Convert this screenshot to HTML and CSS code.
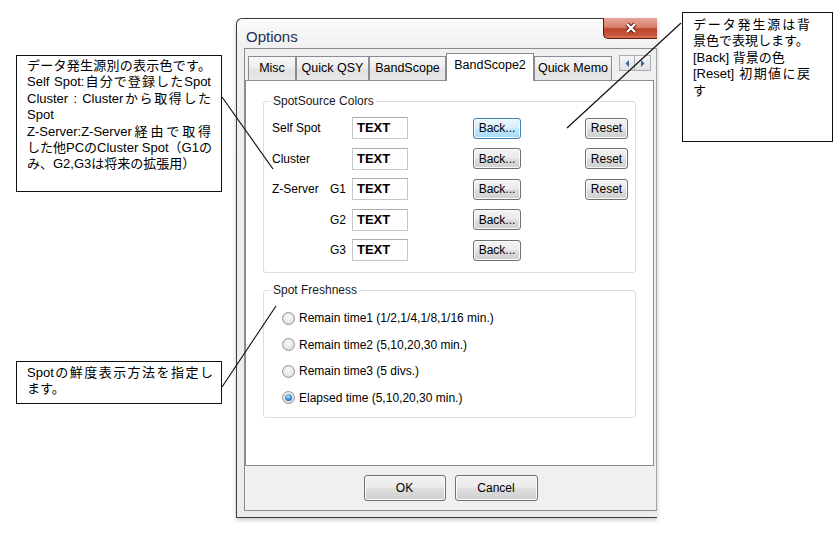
FILE: index.html
```html
<!DOCTYPE html>
<html lang="ja">
<head>
<meta charset="utf-8">
<title>Options</title>
<link rel="stylesheet" href="styles.css">
</head>
<body>
<div class="page">
  <div class="col-left">
    <div class="note note-a">
      <div class="line j">データ発生源別の表示色です。</div>
      <div class="line j">Self Spot:自分で登録したSpot</div>
      <div class="line j">Cluster : Clusterから取得した</div>
      <div class="line">Spot</div>
      <div class="line j">Z-Server:Z-Server経由で取得</div>
      <div class="line j">した他PCのCluster Spot（G1の</div>
      <div class="line">み、G2,G3は将来の拡張用）</div>
    </div>
    <div class="note note-c">
      <div class="line j">Spotの鮮度表示方法を指定し</div>
      <div class="line">ます。</div>
    </div>
  </div>

  <div class="window">
    <div class="titlebar">
      <span class="title">Options</span>
      <div class="close">
        <svg width="14" height="12" viewBox="0 0 14 12"><path d="M3 2 L11 10 M11 2 L3 10" stroke="#5b1d12" stroke-width="4.4" fill="none"/><path d="M3 2 L11 10 M11 2 L3 10" stroke="#ffffff" stroke-width="2.3" fill="none"/></svg>
      </div>
    </div>
    <div class="client">
      <div class="tabs">
        <div class="tab w-misc">Misc</div>
        <div class="tab w-qsy">Quick QSY</div>
        <div class="tab w-bs">BandScope</div>
        <div class="tab sel w-bs2">BandScope2</div>
        <div class="tab w-memo">Quick Memo</div>
        <div class="tab-arrows">
          <span class="arr"><svg width="5" height="7" viewBox="0 0 5 7"><path d="M4 0 L0.5 3.5 L4 7 Z" fill="#3565a8"/></svg></span>
          <span class="arr"><svg width="5" height="7" viewBox="0 0 5 7"><path d="M1 0 L4.5 3.5 L1 7 Z" fill="#3565a8"/></svg></span>
        </div>
      </div>
      <div class="panel">
        <fieldset class="group group-colors">
          <legend>SpotSource Colors</legend>
          <div class="color-grid">
            <span class="lbl span2">Self Spot</span>
            <span class="swatch c3">TEXT</span>
            <button class="btn btn-back focus c4">Back...</button>
            <button class="btn btn-reset c5">Reset</button>

            <span class="lbl span2">Cluster</span>
            <span class="swatch c3">TEXT</span>
            <button class="btn btn-back c4">Back...</button>
            <button class="btn btn-reset c5">Reset</button>

            <span class="lbl c1">Z-Server</span>
            <span class="lbl c2">G1</span>
            <span class="swatch c3">TEXT</span>
            <button class="btn btn-back c4">Back...</button>
            <button class="btn btn-reset c5">Reset</button>

            <span class="lbl c2">G2</span>
            <span class="swatch c3">TEXT</span>
            <button class="btn btn-back c4">Back...</button>

            <span class="lbl c2">G3</span>
            <span class="swatch c3">TEXT</span>
            <button class="btn btn-back c4">Back...</button>
          </div>
        </fieldset>
        <fieldset class="group group-fresh">
          <legend>Spot Freshness</legend>
          <div class="radio-list">
            <div class="radio-row"><span class="radio"></span><span>Remain time1 (1/2,1/4,1/8,1/16 min.)</span></div>
            <div class="radio-row"><span class="radio"></span><span>Remain time2 (5,10,20,30 min.)</span></div>
            <div class="radio-row"><span class="radio"></span><span>Remain time3 (5 divs.)</span></div>
            <div class="radio-row"><span class="radio checked"><span class="radio-dot"></span></span><span>Elapsed time (5,10,20,30 min.)</span></div>
          </div>
        </fieldset>
      </div>
      <div class="footer">
        <button class="btn btn-ok">OK</button>
        <button class="btn btn-cancel">Cancel</button>
      </div>
    </div>
  </div>

  <div class="col-right">
    <div class="note note-b">
      <div class="line j">データ発生源は背</div>
      <div class="line">景色で表現します。</div>
      <div class="line">[Back] 背景の色</div>
      <div class="line j">[Reset] 初期値に戻</div>
      <div class="line">す</div>
    </div>
  </div>

  <svg class="leaders" width="834" height="534" viewBox="0 0 834 534">
    <line x1="222" y1="97" x2="273" y2="169"/>
    <line x1="681" y1="23" x2="567" y2="128"/>
    <line x1="222" y1="387" x2="276" y2="306"/>
  </svg>
</div>
</body>
</html>
```

FILE: styles.css
```css
* { box-sizing: border-box; }
html, body { margin: 0; padding: 0; background: #fff; }
body {
  width: 834px;
  height: 534px;
  overflow: hidden;
  font-family: "Liberation Sans", Arial, sans-serif;
  color: #000;
}
.page {
  position: relative;
  display: flex;
  width: 834px;
  height: 534px;
}

/* ---------- callout notes ---------- */
.col-left {
  flex: none;
  width: 236px;
  padding-left: 16px;
  display: flex;
  flex-direction: column;
}
.col-right {
  flex: none;
  padding-left: 25px;
}
.note {
  border: 1px solid #111;
  background: #fff;
  font: 13px/16.4px "Liberation Sans", "Noto Sans CJK JP", sans-serif;
  color: #000;
}
.note-a {
  width: 206px;
  height: 137px;
  margin-top: 55px;
  padding: 2px 10px 0 10px;
}
.note-c {
  width: 206px;
  height: 43px;
  margin-top: 169px;
  padding: 3px 8px 0 10px;
}
.note-b {
  width: 151px;
  height: 130px;
  margin-top: 12px;
  padding: 4px 22px 0 10px;
}
.line { white-space: nowrap; }
.j { text-align: justify; text-align-last: justify; }

/* ---------- window ---------- */
.window {
  flex: none;
  width: 421px;
  height: 500px;
  margin-top: 18px;
  border: 1px solid #3d3d3d;
  border-right: none;
  border-radius: 6px 0 0 0;
  background: linear-gradient(#fbfbfb, #f0f0f0 30px, #ececec);
  padding: 0 0 6px 0;
  display: flex;
  flex-direction: column;
  box-shadow: 0 2px 4px rgba(0, 0, 0, 0.22);
}
.titlebar {
  height: 29px;
  flex: none;
  display: flex;
  align-items: flex-start;
}
.title {
  padding: 9px 0 0 9px;
  font: 15px/18px "Liberation Sans", Arial, sans-serif;
  color: #1e3050;
}
.close {
  margin-left: auto;
  margin-top: -1px;
  width: 54px;
  height: 21px;
  border: 1px solid #5e1a12;
  border-top: none;
  border-right: none;
  border-radius: 0 0 0 5px;
  background: linear-gradient(#e6a596, #d8816f 45%, #c0452f 55%, #c95439 85%, #d97758);
  display: flex;
  align-items: center;
  justify-content: center;
}
.client {
  flex: 1;
  margin-left: 7px;
  border: 1px solid #8d8d8d;
  border-right-color: #a5a5a5;
  background: #f0f0f0;
  display: flex;
  flex-direction: column;
}

/* ---------- tabs ---------- */
.tabs {
  height: 31px;
  flex: none;
  display: flex;
  align-items: flex-end;
  padding-left: 3px;
}
.tab {
  height: 24px;
  border: 1px solid #898c95;
  border-bottom: none;
  background: linear-gradient(#f7f7f7, #ececec 50%, #e1e1e1 50%, #e7e7e7);
  font: 12.5px/22px "Liberation Sans", Arial, sans-serif;
  text-align: center;
  white-space: nowrap;
}
.tab.sel {
  height: 28px;
  margin-bottom: -1px;
  background: #fff;
  position: relative;
  z-index: 1;
  line-height: 20px;
  padding-top: 1px;
}
.w-misc { width: 48px; }
.w-qsy { width: 73px; }
.w-bs { width: 77px; }
.w-bs2 { width: 88px; }
.w-memo { width: 78px; }
.tab-arrows {
  align-self: flex-start;
  margin-top: 6px;
  margin-left: 7px;
  display: flex;
}
.arr {
  width: 16px;
  height: 16px;
  border: 1px solid #a9acb3;
  background: linear-gradient(#f6f6f6, #e2e2e2);
  display: flex;
  align-items: center;
  justify-content: center;
}
.arr + .arr { border-left: none; }

/* ---------- panel ---------- */
.panel {
  flex: none;
  height: 386px;
  margin-right: 2px;
  background: #fff;
  border: 1px solid #898c95;
  padding: 13px 0 0 17px;
}
.group {
  margin: 0;
  width: 373px;
  min-inline-size: 0;
  border: 1px solid #d5dfe5;
  border-radius: 3px;
  padding: 0;
}
.group legend {
  margin-left: 7px;
  padding: 0 2px;
  font: 12px/14px "Liberation Sans", Arial, sans-serif;
  color: #1a1a1a;
}
.group-colors {
  padding: 9px 0 11px 0;
}
.group-fresh {
  margin-top: 10px;
  padding: 13px 0 11px 0;
}
.radio-list {
  padding-left: 18px;
  display: flex;
  flex-direction: column;
  gap: 10.5px;
}
.color-grid {
  padding-left: 8px;
  display: grid;
  grid-template-columns: 58px 22px 56px 113px 107px;
  grid-auto-rows: 22px;
  row-gap: 8.5px;
  align-items: center;
  font-size: 12px;
}
.lbl { font: 12px/14px "Liberation Sans", Arial, sans-serif; white-space: nowrap; }
.span2 { grid-column: 1 / 3; }
.c1 { grid-column: 1; }
.c2 { grid-column: 2; }
.c3 { grid-column: 3; }
.c4 { grid-column: 4; justify-self: end; }
.c5 { grid-column: 5; justify-self: end; }
.swatch {
  height: 22px;
  border: 1px solid #c4c7cc;
  border-top-color: #abadb3;
  background: #fff;
  font: bold 13px/20px "Liberation Sans", Arial, sans-serif;
  padding-left: 4px;
}

/* ---------- buttons ---------- */
.btn {
  font: 12px "Liberation Sans", Arial, sans-serif;
  color: #000;
  border: 1px solid #707070;
  border-radius: 3px;
  background: linear-gradient(#f2f2f2, #ebebeb 45%, #dddddd 55%, #cfcfcf);
  box-shadow: inset 0 0 0 1px #fbfbfb;
  padding: 0;
  margin: 0;
}
.btn.focus {
  border-color: #3c7fb1;
  background: linear-gradient(#eaf6fd, #d9f0fc 45%, #bee6fd 55%, #a7d9f5);
  box-shadow: inset 0 0 0 1px #f3fbff;
}
.btn-back { width: 48px; height: 21px; }
.btn-reset { width: 43px; height: 21px; }
.btn-ok { width: 82px; height: 26px; }
.btn-cancel { width: 83px; height: 26px; }

/* ---------- radios ---------- */
.radio-row {
  height: 16px;
  display: flex;
  align-items: center;
  gap: 4px;
  font: 12px/14px "Liberation Sans", Arial, sans-serif;
  white-space: nowrap;
}
.radio {
  flex: none;
  width: 13px;
  height: 13px;
  border-radius: 50%;
  border: 1px solid #959595;
  background: radial-gradient(circle at 50% 40%, #fdfdfd, #e6e6e6 55%, #cdcdcd);
  display: flex;
  align-items: center;
  justify-content: center;
}
.radio-dot {
  width: 7px;
  height: 7px;
  border-radius: 50%;
  background: radial-gradient(circle at 45% 35%, #b9e6ff, #3d8fd6 50%, #0f4c8f);
}

/* ---------- footer ---------- */
.footer {
  flex: 1;
  display: flex;
  justify-content: center;
  align-items: flex-start;
  gap: 9px;
  padding-top: 9px;
}

/* ---------- leader lines ---------- */
.leaders {
  position: absolute;
  left: 0;
  top: 0;
  pointer-events: none;
}
.leaders line {
  stroke: #111;
  stroke-width: 1.2;
}
```
